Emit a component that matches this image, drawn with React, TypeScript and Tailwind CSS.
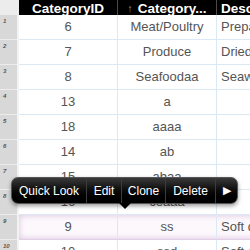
const rows = [
  { n: 1, id: "6", name: "Meat/Poultry", desc: "Prepared meats" },
  { n: 2, id: "7", name: "Produce", desc: "Dried fruit" },
  { n: 3, id: "8", name: "Seafoodaa", desc: "Seaweed and fish" },
  { n: 4, id: "13", name: "a", desc: "" },
  { n: 5, id: "18", name: "aaaa", desc: "" },
  { n: 6, id: "14", name: "ab", desc: "" },
  { n: 7, id: "15", name: "abaa", desc: "" },
  { n: 8, id: "16", name: "ceaaa", desc: "" },
  { n: 9, id: "9", name: "ss", desc: "Soft drinks" },
  { n: 10, id: "10", name: "ssd", desc: "Soft cheese" },
];

const menuItems = [
  { label: "Quick Look", w: "w-[75px]" },
  { label: "Edit", w: "w-[35px]" },
  { label: "Clone", w: "w-[44px]" },
  { label: "Delete", w: "w-[50px]" },
];

export default function App() {
  return (
    <div className="relative w-[250px] h-[250px] overflow-hidden bg-white font-['Helvetica','Liberation_Sans',sans-serif]">
      {/* HEADER */}
      <div className="flex h-[15px] overflow-hidden">
        <div className="w-[19px] shrink-0 bg-[#ececec]" />
        <div className="w-[99px] shrink-0 bg-black border-r border-[#4a4a4a] flex items-end justify-center">
          <span className="text-white text-[13.5px] font-bold leading-none mb-[0px]">CategoryID</span>
        </div>
        <div className="w-[99px] shrink-0 bg-black border-r border-[#4a4a4a] flex items-end justify-center gap-[5px]">
          <span className="text-[#8a8a8a] text-[11px] leading-none mb-[1px]">↑</span>
          <span className="text-white text-[13.5px] font-bold leading-none mb-[0px]">Category...</span>
        </div>
        <div className="flex-1 bg-black flex items-end pl-[4px]">
          <span className="text-white text-[13.5px] font-bold leading-none mb-[0px] whitespace-nowrap">Description</span>
        </div>
      </div>

      {/* ROWS */}
      {rows.map((r) => {
        const selected = r.n === 9;
        return (
          <div key={r.n} className="flex h-[25px]">
            <div className="w-[17px] shrink-0 bg-[#d8d8d8] border-b border-[#ececec] relative">
              <span className="absolute left-[3px] top-[3px] text-[6px] italic font-bold text-[#555] leading-none">
                {r.n}
              </span>
            </div>
            <div className="w-[2px] shrink-0 bg-[#f2f2f2]" />
            <div
              className={
                selected
                  ? "flex-1 flex bg-[#fcf8fc] shadow-[inset_0_0_6px_#d9bfe0] border-b border-[#e2cfe6]"
                  : "flex-1 flex border-b border-[#dbe9f4]"
              }
            >
              <div className="w-[99px] shrink-0 border-r border-[#dbe9f4] flex items-center justify-center text-[13px] text-[#555]">
                {r.id}
              </div>
              <div className="w-[99px] shrink-0 border-r border-[#dbe9f4] flex items-center justify-center text-[13px] text-[#555]">
                {r.name}
              </div>
              <div className="flex-1 flex items-center pl-[4px] text-[13px] text-[#555] whitespace-nowrap overflow-hidden">
                {r.desc}
              </div>
            </div>
          </div>
        );
      })}

      {/* POPUP MENU */}
      <div className="absolute left-[11px] top-[177px] w-[227px] h-[27px]">
        <div className="h-full rounded-[7px] bg-gradient-to-b from-[#3a3a3a] via-[#0c0c0c] to-black border border-[#555] shadow-[0_2px_4px_rgba(0,0,0,0.4)] flex items-center text-white text-[12px] overflow-hidden">
          {menuItems.map((m) => (
            <div
              key={m.label}
              className={`${m.w} shrink-0 h-full flex items-center justify-center whitespace-nowrap border-r border-[#3c3c3c]`}
            >
              {m.label}
            </div>
          ))}
          <div className="flex-1 flex items-center justify-center text-[11px]">▶</div>
        </div>
        <div className="absolute left-[108px] top-[26px] w-0 h-0 border-l-[6px] border-r-[6px] border-t-[6px] border-l-transparent border-r-transparent border-t-black" />
      </div>
    </div>
  );
}
